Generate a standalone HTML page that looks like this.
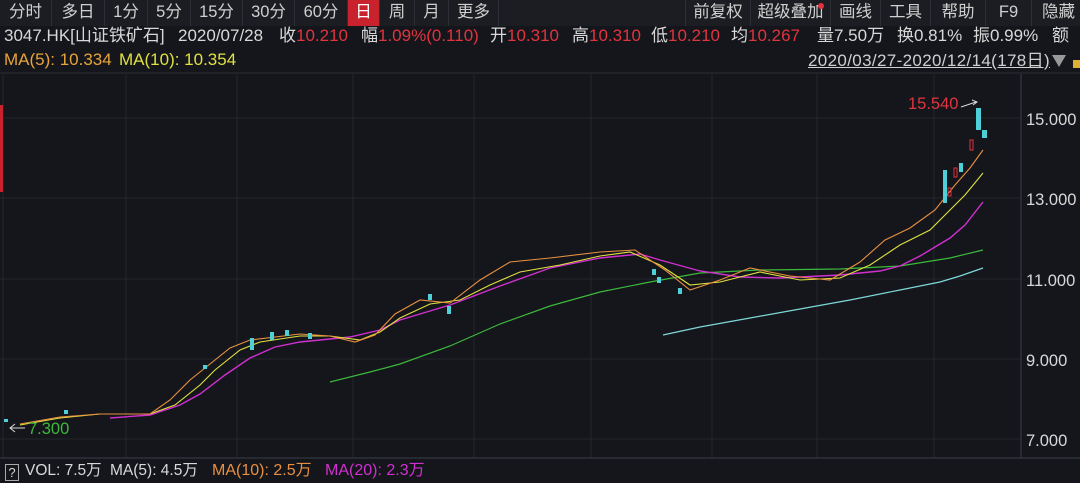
<!DOCTYPE html>
<html><head><meta charset="utf-8"><style>
*{margin:0;padding:0;box-sizing:border-box}
body{width:1080px;height:483px;background:#14161b;overflow:hidden;position:relative;font-family:"Liberation Sans","Noto Sans CJK SC",sans-serif;color:#d8d8d8}
.tabs{position:absolute;top:0;left:0;height:26px;width:1080px;background:#1b1d22;font-size:16.5px}
.t{position:absolute;top:0;height:26px;line-height:25px;text-align:center;border-right:1px solid #2c2f36;color:#cfcfcf}
.a{position:absolute;top:25px;line-height:22px;font-size:17px;white-space:nowrap}
.v{position:absolute;top:461px;line-height:20px;font-size:16px;white-space:nowrap}
.r{color:#e0343f}
svg{position:absolute;left:0;top:0}
</style></head><body>
<div class="tabs">
<div class="t" style="left:0;width:52px">分时</div>
<div class="t" style="left:52px;width:53px">多日</div>
<div class="t" style="left:105px;width:43px">1分</div>
<div class="t" style="left:148px;width:43px">5分</div>
<div class="t" style="left:191px;width:52px">15分</div>
<div class="t" style="left:243px;width:52px">30分</div>
<div class="t" style="left:295px;width:53px">60分</div>
<div class="t" style="left:348px;width:32px;background:#c8232c;color:#fff">日</div>
<div class="t" style="left:380px;width:35px">周</div>
<div class="t" style="left:415px;width:34px">月</div>
<div class="t" style="left:449px;width:50px">更多</div>
<div class="t" style="left:685px;width:66px;border-left:1px solid #2c2f36">前复权</div>
<div class="t" style="left:751px;width:80px">超级叠加<span style="position:absolute;right:6px;top:3px;width:6px;height:6px;border-radius:3px;background:#e0343f"></span></div>
<div class="t" style="left:831px;width:50px">画线</div>
<div class="t" style="left:881px;width:50px">工具</div>
<div class="t" style="left:931px;width:55px">帮助</div>
<div class="t" style="left:986px;width:46px">F9</div>
<div class="t" style="left:1032px;width:60px;text-align:left;padding-left:10px">隐藏</div>
</div>
<div class="a" style="left:4px">3047.HK[山证铁矿石]</div>
<div class="a" style="left:178px">2020/07/28</div>
<div class="a" style="left:279px">收<span class="r">10.210</span></div>
<div class="a" style="left:361px">幅<span class="r">1.09%(0.110)</span></div>
<div class="a" style="left:490px">开<span class="r">10.310</span></div>
<div class="a" style="left:572px">高<span class="r">10.310</span></div>
<div class="a" style="left:651px">低<span class="r">10.210</span></div>
<div class="a" style="left:731px">均<span class="r">10.267</span></div>
<div class="a" style="left:817px">量7.50万</div>
<div class="a" style="left:897px">换0.81%</div>
<div class="a" style="left:973px">振0.99%</div>
<div class="a" style="left:1052px">额</div>
<div class="a" style="top:49px;left:4px"><span style="color:#e8a33a">MA(5): 10.334</span></div>
<div class="a" style="top:49px;left:119px"><span style="color:#e0e040">MA(10): 10.354</span></div>
<div class="a" style="top:50px;left:808px;font-size:17px;text-decoration:underline;color:#d0d0d0;letter-spacing:0.35px">2020/03/27-2020/12/14(178日)</div>
<div style="position:absolute;left:1052px;top:55px;width:0;height:0;border-left:7px solid transparent;border-right:7px solid transparent;border-top:12px solid #999"></div>
<div style="position:absolute;left:1073px;top:60px;width:7px;height:8px;background:#e0b030"></div>
<svg width="1080" height="483">
<line x1="0" y1="73" x2="1080" y2="73" stroke="#2c2f36"/>
<g stroke="#24272e" stroke-width="1">
<line x1="0" y1="118" x2="1021" y2="118"/><line x1="0" y1="198" x2="1021" y2="198"/><line x1="0" y1="279" x2="1021" y2="279"/><line x1="0" y1="359" x2="1021" y2="359"/><line x1="0" y1="439" x2="1021" y2="439"/>
<line x1="3" y1="74" x2="3" y2="458"/><line x1="126" y1="74" x2="126" y2="458"/><line x1="237" y1="74" x2="237" y2="458"/><line x1="353" y1="74" x2="353" y2="458"/><line x1="474" y1="74" x2="474" y2="458"/><line x1="591" y1="74" x2="591" y2="458"/><line x1="712" y1="74" x2="712" y2="458"/><line x1="817" y1="74" x2="817" y2="458"/><line x1="934" y1="74" x2="934" y2="458"/>
<line x1="1021" y1="74" x2="1021" y2="458" stroke="#3a3d44"/>
<line x1="0" y1="458" x2="1080" y2="458" stroke="#3a3d44"/>
</g>
<rect x="0" y="105" width="3" height="87" fill="#c8232c"/>
<g font-size="16.5" fill="#d8d8d8" font-family="Liberation Sans,sans-serif">
<text x="1026" y="125">15.000</text><text x="1026" y="205">13.000</text><text x="1026" y="286">11.000</text><text x="1026" y="366">9.000</text><text x="1026" y="446">7.000</text>
</g>
<polyline fill="none" stroke="#7fd8d8" stroke-width="1.2" points="663,335 700,327 750,318 800,309 850,300 900,290 940,282 960,276 983,268"/>
<polyline fill="none" stroke="#3cb83c" stroke-width="1.2" points="330,382 370,372 400,364 450,346 500,324 550,306 600,292 650,282 700,273 760,270 840,269 900,266 950,258 983,250"/>
<polyline fill="none" stroke="#d030d0" stroke-width="1.4" points="110,418 150,415 180,405 200,394 225,375 250,358 275,347 300,342 350,337 380,330 400,320 450,305 500,286 550,268 600,258 640,254 660,260 700,271 740,277 780,278 840,275 880,271 900,266 920,256 950,238 965,225 983,202"/>
<polyline fill="none" stroke="#e0e040" stroke-width="1.1" points="20,425 60,418 100,414 150,414 175,405 200,385 215,370 240,350 260,342 300,336 330,336 360,340 380,332 400,318 430,304 460,300 490,285 520,272 560,265 600,256 630,252 660,265 690,285 720,282 760,272 800,280 840,278 870,265 900,245 930,230 950,210 965,195 983,173"/>
<polyline fill="none" stroke="#e89040" stroke-width="1.1" points="20,424 60,417 100,414 150,414 170,400 190,380 205,368 230,348 250,340 300,334 330,336 355,342 375,335 395,314 420,300 450,303 480,280 510,262 550,258 600,252 635,250 665,270 690,290 720,280 750,268 790,276 830,280 860,262 885,240 910,228 935,210 955,185 970,168 983,150"/>
<g fill="#4fd0d8">
<rect x="976" y="108" width="5" height="22"/><rect x="982" y="130" width="5" height="8"/>
<rect x="943" y="170" width="4" height="33"/><rect x="959" y="163" width="4" height="9"/>
<rect x="250" y="338" width="4" height="12"/><rect x="270" y="332" width="4" height="8"/><rect x="285" y="330" width="4" height="6"/><rect x="308" y="333" width="4" height="6"/>
<rect x="428" y="294" width="4" height="6"/><rect x="447" y="306" width="4" height="8"/><rect x="652" y="269" width="4" height="6"/><rect x="657" y="277" width="4" height="6"/><rect x="678" y="288" width="4" height="6"/>
<rect x="203" y="365" width="4" height="4"/><rect x="64" y="410" width="4" height="4"/><rect x="4" y="419" width="4" height="3"/>
</g>
<g fill="none" stroke="#e0343f"><rect x="970" y="140" width="3" height="10"/><rect x="954" y="168" width="3" height="9"/><rect x="948" y="188" width="3" height="8"/></g>
<g stroke="#d8d8d8" fill="none"><path d="M961,107 L976,102 M972,100 L977,102 L973,105"/><path d="M10,428 L25,428 M15,424 L10,428 L15,432"/></g>
<text x="908" y="109" font-size="16.5" fill="#e0343f" font-family="Liberation Sans,sans-serif">15.540</text>
<text x="28" y="434" font-size="16.5" fill="#3cb83c" font-family="Liberation Sans,sans-serif">7.300</text>
</svg>
<div class="v" style="left:5px"><span style="display:inline-block;width:14px;height:17px;border:1px solid #aaa;text-align:center;font-size:13px;line-height:15px;vertical-align:-2px">?</span></div>
<div class="v" style="left:25px;font-size:15.5px">VOL: 7.5万</div>
<div class="v" style="left:110px;font-size:15.5px">MA(5): 4.5万</div>
<div class="v" style="left:212px;color:#e89040">MA(10): 2.5万</div>
<div class="v" style="left:325px;color:#d030d0">MA(20): 2.3万</div>
</body></html>
